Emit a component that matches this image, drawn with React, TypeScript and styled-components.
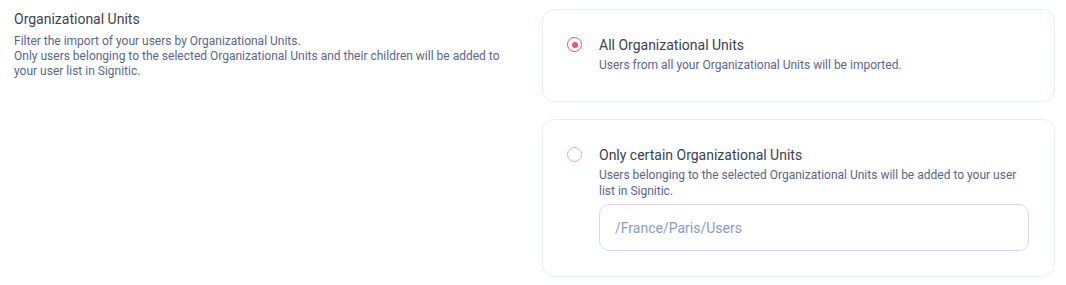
import React from "react";
import styled, { createGlobalStyle } from "styled-components";

const Global = createGlobalStyle`
  html, body { margin: 0; padding: 0; background: #ffffff; }
  body { font-family: Roboto, "Noto Sans", Arial, sans-serif; }
  * { box-sizing: border-box; }
`;

const Page = styled.div`
  display: flex;
  width: 1066px;
  padding: 9px 12px 0 14px;
`;

const Intro = styled.div`
  width: 528px;
  flex: none;
  padding-top: 1px;
`;

const IntroTitle = styled.div`
  font-size: 14px;
  line-height: 18px;
  color: #3d4250;
  margin-bottom: 6px;
`;

const IntroText = styled.div`
  font-size: 12px;
  line-height: 15px;
  color: #5a6689;
  width: 504px;
`;

const Options = styled.div`
  flex: 1;
  display: flex;
  flex-direction: column;
  gap: 17px;
`;

const Card = styled.label<{ $pb: number }>`
  display: flex;
  gap: 17px;
  padding: 26px 25px ${(p) => p.$pb}px 24px;
  border: 1px solid #e8eef9;
  border-radius: 12px;
  background: #fff;
  cursor: pointer;
`;

const Radio = styled.span<{ $checked?: boolean }>`
  flex: none;
  width: 15px;
  height: 15px;
  margin-top: 1px;
  border-radius: 50%;
  border: 1.5px solid ${(p) => (p.$checked ? "#f0506e" : "#f6a3b3")};
  display: flex;
  align-items: center;
  justify-content: center;
  &::after {
    content: "";
    width: 6px;
    height: 6px;
    border-radius: 50%;
    background: #f0506e;
    display: ${(p) => (p.$checked ? "block" : "none")};
  }
`;

const Body = styled.div`
  flex: 1;
  display: flex;
  flex-direction: column;
`;

const OptionTitle = styled.div`
  font-size: 14px;
  line-height: 18px;
  color: #3a3f4d;
  margin-bottom: 3px;
`;

const OptionText = styled.div`
  font-size: 12px;
  line-height: 16px;
  color: #5a6689;
`;

const Input = styled.input`
  margin-top: 5px;
  height: 47px;
  width: 430px;
  border: 1px solid #cfdcf3;
  border-radius: 10px;
  padding: 0 15px;
  font-family: inherit;
  font-size: 14px;
  color: #3a3f4d;
  outline: none;
  &::placeholder { color: #8c9bc2; }
`;

export default function App() {
  return (
    <>
      <Global />
      <Page>
        <Intro>
          <IntroTitle>Organizational Units</IntroTitle>
          <IntroText>
            Filter the import of your users by Organizational Units.
            <br />
            Only users belonging to the selected Organizational Units and their children will be added to your user list in Signitic.
          </IntroText>
        </Intro>
        <Options>
          <Card $pb={28}>
            <Radio $checked />
            <Body>
              <OptionTitle>All Organizational Units</OptionTitle>
              <OptionText>Users from all your Organizational Units will be imported.</OptionText>
            </Body>
          </Card>
          <Card $pb={25}>
            <Radio />
            <Body>
              <OptionTitle>Only certain Organizational Units</OptionTitle>
              <OptionText>
                Users belonging to the selected Organizational Units will be added to your user list in Signitic.
              </OptionText>
              <Input placeholder="/France/Paris/Users" />
            </Body>
          </Card>
        </Options>
      </Page>
    </>
  );
}
